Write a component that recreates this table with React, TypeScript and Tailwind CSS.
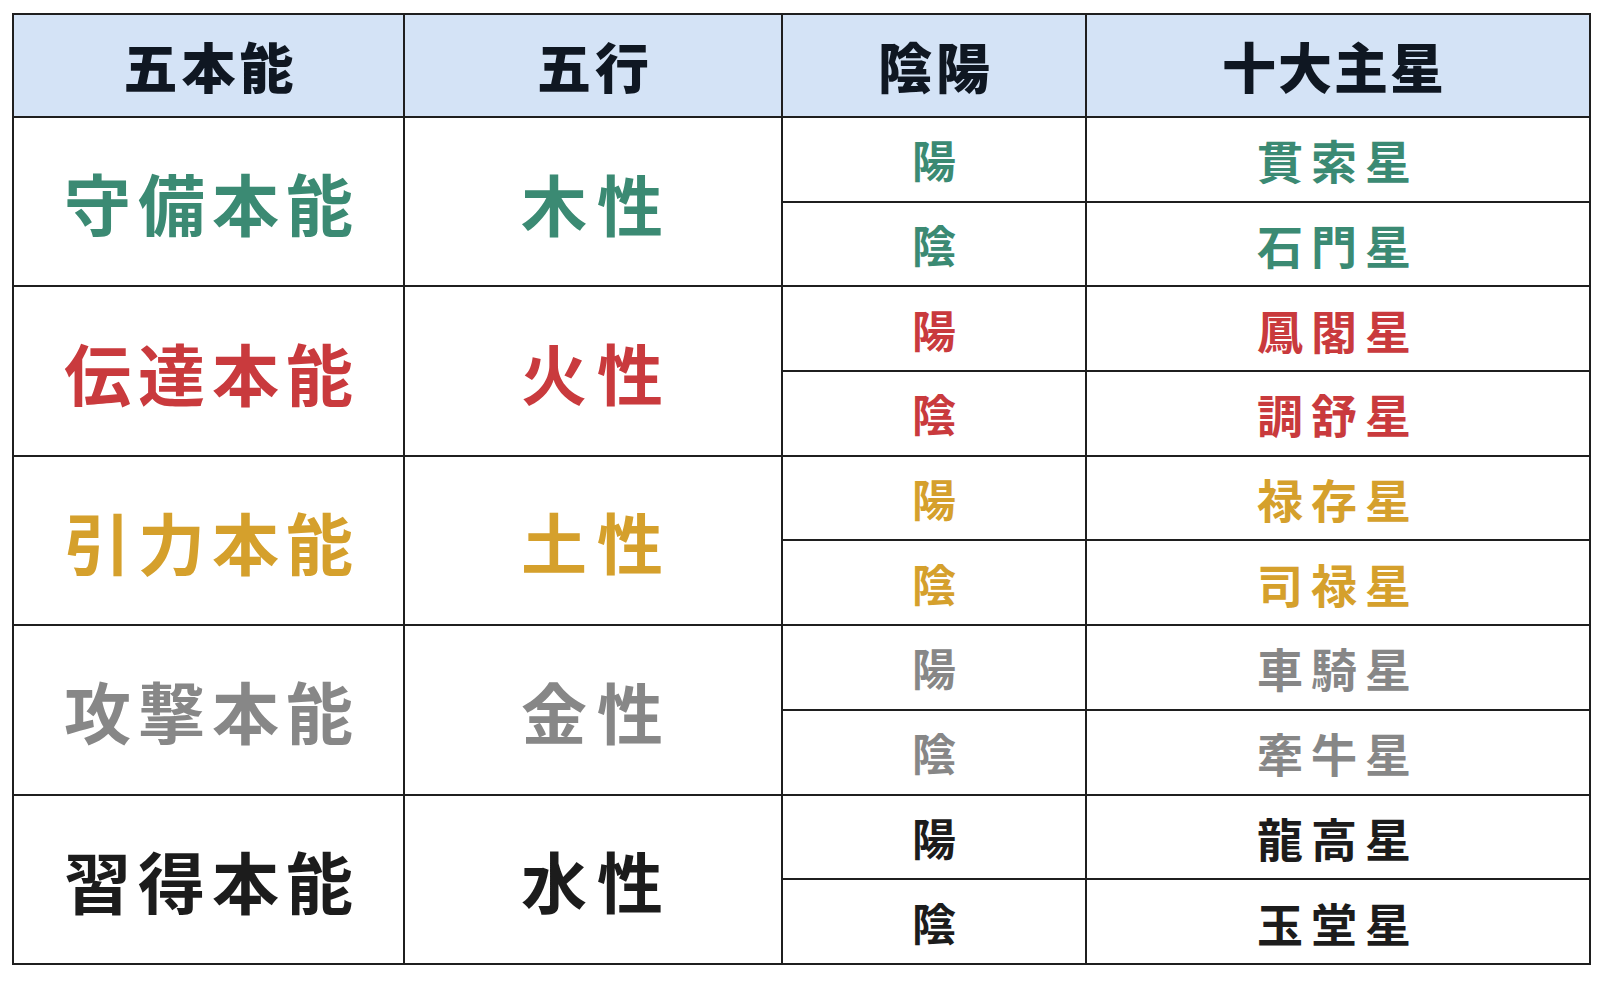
import React from "react";

type Group = {
  instinct: string;
  element: string;
  stars: [string, string];
  color: string;
};

const groups: Group[] = [
  { instinct: "守備本能", element: "木性", stars: ["貫索星", "石門星"], color: "text-[#3b8a73]" },
  { instinct: "伝達本能", element: "火性", stars: ["鳳閣星", "調舒星"], color: "text-[#c93a3d]" },
  { instinct: "引力本能", element: "土性", stars: ["禄存星", "司禄星"], color: "text-[#d5a02c]" },
  { instinct: "攻撃本能", element: "金性", stars: ["車騎星", "牽牛星"], color: "text-[#878787]" },
  { instinct: "習得本能", element: "水性", stars: ["龍高星", "玉堂星"], color: "text-[#1c1c1c]" },
];

const font = { fontFamily: '"Noto Sans CJK JP", "Noto Sans CJK SC", sans-serif' };

export default function App() {
  return (
    <div className="w-[1602px] h-[982px] bg-white" style={font}>
      <div className="pt-[13px] pl-[12px]">
        <table className="border-collapse w-[1577px] table-fixed">
          <colgroup>
            <col className="w-[391px]" />
            <col className="w-[378px]" />
            <col className="w-[304px]" />
            <col className="w-[504px]" />
          </colgroup>
          <thead>
            <tr className="h-[103px] bg-[#d4e3f6]">
              {["五本能", "五行", "陰陽"].map((h) => (
                <th
                  key={h}
                  className="border-2 border-[#1f1f1f] text-center align-middle text-[54px] font-black tracking-[4px] text-[#0f1722] leading-none p-0"
                >
                  <span className="pl-[4px]">{h}</span>
                </th>
              ))}
              <th className="border-2 border-[#1f1f1f] text-center align-middle text-[54px] font-black tracking-[2px] text-[#0f1722] leading-none p-0">
                <span className="pr-[8px]">十大主星</span>
              </th>
            </tr>
          </thead>
          <tbody>
            {groups.map((g) => (
              <React.Fragment key={g.instinct}>
                <tr className="h-[84.7px]">
                  <td
                    rowSpan={2}
                    className={`border-2 border-[#1f1f1f] text-center align-middle text-[67px] font-bold tracking-[7px] leading-none p-0 ${g.color}`}
                  >
                    <span className="pl-[7px]">{g.instinct}</span>
                  </td>
                  <td
                    rowSpan={2}
                    className={`border-2 border-[#1f1f1f] text-center align-middle text-[66px] font-bold tracking-[10px] leading-none p-0 ${g.color}`}
                  >
                    <span className="pl-[8px]">{g.element}</span>
                  </td>
                  <td className={`border-2 border-[#1f1f1f] text-center align-middle text-[44px] font-bold leading-none p-0 ${g.color}`}>
                    陽
                  </td>
                  <td className={`border-2 border-[#1f1f1f] text-center align-middle text-[46px] font-bold tracking-[8px] leading-none p-0 ${g.color}`}>
                    <span>{g.stars[0]}</span>
                  </td>
                </tr>
                <tr className="h-[84.7px]">
                  <td className={`border-2 border-[#1f1f1f] text-center align-middle text-[44px] font-bold leading-none p-0 ${g.color}`}>
                    陰
                  </td>
                  <td className={`border-2 border-[#1f1f1f] text-center align-middle text-[46px] font-bold tracking-[8px] leading-none p-0 ${g.color}`}>
                    <span>{g.stars[1]}</span>
                  </td>
                </tr>
              </React.Fragment>
            ))}
          </tbody>
        </table>
      </div>
    </div>
  );
}
